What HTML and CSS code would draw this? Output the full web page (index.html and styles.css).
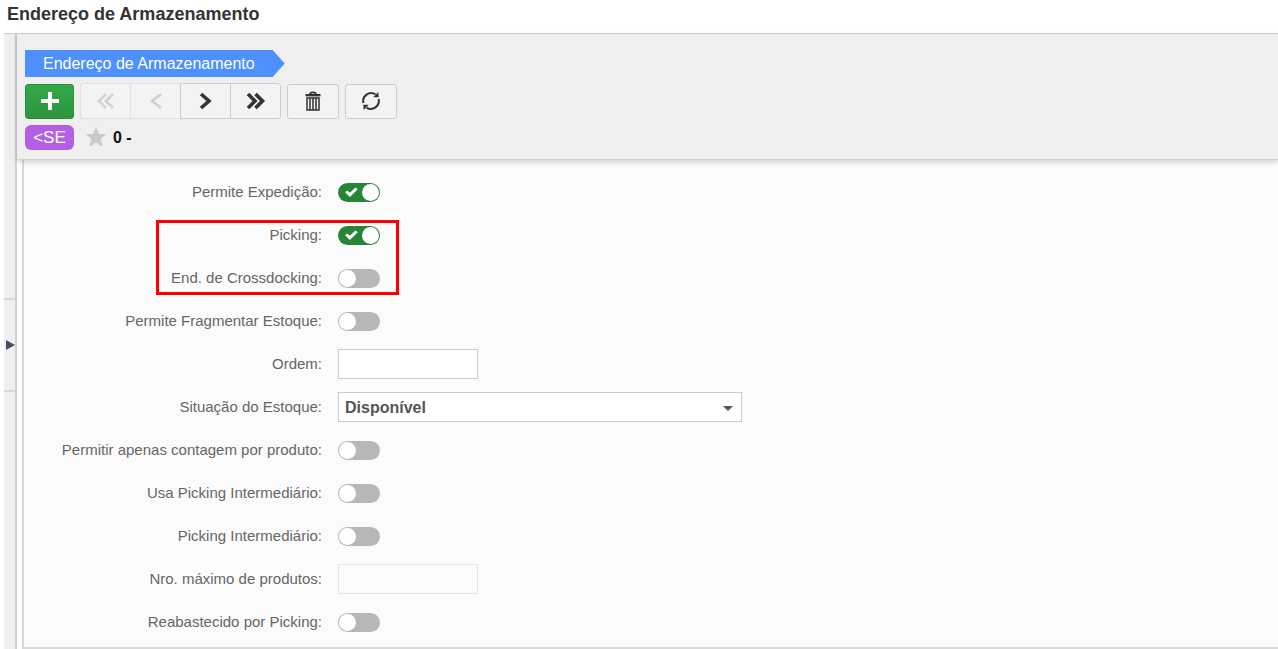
FILE: index.html
```html
<!DOCTYPE html>
<html lang="pt-BR">
<head>
<meta charset="utf-8">
<meta name="viewport" content="width=device-width, initial-scale=1">
<title>Endereço de Armazenamento</title>
<link rel="stylesheet" href="styles.css">
</head>
<body>
<h1 class="title">Endereço de Armazenamento</h1>
<div class="workspace">
  <aside class="rail">
    <button class="rail-toggle" type="button" aria-label="Expandir painel">
      <svg width="9" height="10" viewBox="0 0 9 10"><path d="M0 0L9 5L0 10Z" fill="#44505e"/></svg>
    </button>
  </aside>
  <main class="main">
    <header class="header">
      <a class="crumb" href="#">Endereço de Armazenamento</a>
      <div class="toolbar">
        <button class="btn btn-add" type="button" aria-label="Adicionar">
          <svg width="18" height="18" viewBox="0 0 18 18"><path d="M9 1V17M1 9H17" stroke="#fff" stroke-width="4" stroke-linecap="round"/></svg>
        </button>
        <div class="nav">
          <button class="nav-btn" type="button" aria-label="Primeiro" disabled>
            <svg width="20" height="18" viewBox="0 0 20 18"><path d="M10 2L3 9L10 16M17 2L10 9L17 16" fill="none" stroke="currentColor" stroke-width="2.6"/></svg>
          </button>
          <button class="nav-btn" type="button" aria-label="Anterior" disabled>
            <svg width="20" height="18" viewBox="0 0 20 18"><path d="M15 2L6 9L15 16" fill="none" stroke="currentColor" stroke-width="2.8"/></svg>
          </button>
          <button class="nav-btn" type="button" aria-label="Próximo">
            <svg width="20" height="18" viewBox="0 0 20 18"><path d="M5 2L13 9L5 16" fill="none" stroke="currentColor" stroke-width="3.6"/></svg>
          </button>
          <button class="nav-btn" type="button" aria-label="Último">
            <svg width="20" height="18" viewBox="0 0 20 18"><path d="M2 2L9 9L2 16M9.500 2L16.500 9L9.500 16" fill="none" stroke="currentColor" stroke-width="3.600"/></svg>
          </button>
        </div>
        <button class="btn" type="button" aria-label="Excluir">
          <svg width="16" height="20" viewBox="0 0 16 20"><path d="M5 3.500C5 0.600 11 0.600 11 3.500" fill="none" stroke="currentColor" stroke-width="1.800"/><path d="M0.500 3H15.500V5.400H0.500Z" fill="currentColor"/><path d="M2 7H14V19H2ZM5 7V19M8 7V19M11 7V19" fill="none" stroke="currentColor" stroke-width="1.500"/></svg>
        </button>
        <button class="btn" type="button" aria-label="Atualizar">
          <svg width="20" height="20" viewBox="0 0 20 20"><path d="M2.400 12A8 8 0 0 1 14.500 3.400M17.600 8A8 8 0 0 1 5.500 16.600" fill="none" stroke="currentColor" stroke-width="2"/><path d="M12.300 6.300L17.800 6.300L17.200 1ZM7.700 13.700H2.200L2.800 19Z" fill="currentColor"/></svg>
        </button>
      </div>
      <div class="record">
        <span class="chip">&lt;SE</span>
        <svg class="star" width="22" height="20" viewBox="0 0 22 20"><path d="M11 0L14 7H21.500L15.500 12L18 20L11 15.400L4 20L6.500 12L0.500 7H8Z" fill="#c9c9c9"/></svg>
        <span class="record-id">0 -</span>
      </div>
    </header>
    <form class="form">
      <div class="row"><label for="expedicao">Permite Expedição:</label><input class="switch" id="expedicao" type="checkbox" checked></div>
      <div class="marked">
        <div class="row"><label for="picking">Picking:</label><input class="switch" id="picking" type="checkbox" checked></div>
        <div class="row"><label for="crossdocking">End. de Crossdocking:</label><input class="switch" id="crossdocking" type="checkbox"></div>
      </div>
      <div class="row"><label for="fragmentar">Permite Fragmentar Estoque:</label><input class="switch" id="fragmentar" type="checkbox"></div>
      <div class="row"><label for="ordem">Ordem:</label><input class="field" id="ordem" type="text"></div>
      <div class="row"><label for="situacao">Situação do Estoque:</label>
        <div class="select">
          <select class="field" id="situacao"><option>Disponível</option></select>
          <svg class="caret" width="10" height="5" viewBox="0 0 10 5"><path d="M0 0H10L5 5Z" fill="#555"/></svg>
        </div>
      </div>
      <div class="row"><label for="contagem">Permitir apenas contagem por produto:</label><input class="switch" id="contagem" type="checkbox"></div>
      <div class="row"><label for="usa">Usa Picking Intermediário:</label><input class="switch" id="usa" type="checkbox"></div>
      <div class="row"><label for="intermediario">Picking Intermediário:</label><input class="switch" id="intermediario" type="checkbox"></div>
      <div class="row"><label for="maximo">Nro. máximo de produtos:</label><input class="field" id="maximo" type="text" disabled></div>
      <div class="row"><label for="reabastecido">Reabastecido por Picking:</label><input class="switch" id="reabastecido" type="checkbox"></div>
    </form>
  </main>
</div>
</body>
</html>
```

FILE: styles.css
```css
*,
*::before,
*::after {
  box-sizing: border-box;
}

body {
  margin: 0;
  min-height: 100vh;
  display: flex;
  flex-direction: column;
  background: #fff;
  color: #666;
  font-family: "Liberation Sans", Arial, sans-serif;
  font-size: 15px;
}

button {
  padding: 0;
  font: inherit;
}

.title {
  margin: 0;
  padding: 4px 7px 9px;
  font-size: 18px;
  line-height: 20px;
  color: #333;
}

.workspace {
  flex: 1;
  display: flex;
  margin-left: 4px;
  border-top: 1px solid #d0d0d0;
}

.rail {
  display: flex;
  flex-direction: column;
  flex: 0 0 11px;
  padding-top: 264px;
  background: #efefef;
}

.rail-toggle {
  display: flex;
  align-items: center;
  justify-content: flex-end;
  height: 94px;
  border: 0;
  border-top: 2px solid #d8d8d8;
  border-bottom: 2px solid #d8d8d8;
  background: #efefef;
}

.main {
  flex: 1;
  display: flex;
  flex-direction: column;
  min-width: 0;
  border-left: 2px solid #d0d0d0;
}

.header {
  position: relative;
  display: flex;
  flex-direction: column;
  align-items: flex-start;
  padding: 16px 8px 9px;
  background: #efefef;
  border-bottom: 1px solid #d0d0d0;
  box-shadow: 0 2px 5px rgba(0, 0, 0, 0.18);
}

.crumb {
  padding: 0 30px 0 18px;
  background: #4d90fe;
  clip-path: polygon(0 0, calc(100% - 12px) 0, 100% 50%, calc(100% - 12px) 100%, 0 100%);
  color: #fff;
  font-size: 16px;
  line-height: 27px;
  text-decoration: none;
}

.toolbar {
  display: flex;
  align-items: center;
  gap: 6px;
  margin-top: 6px;
}

.btn,
.nav-btn {
  display: flex;
  align-items: center;
  justify-content: center;
  width: 52px;
  height: 35px;
  border: 1px solid #ccc;
  border-radius: 3px;
  background: #f3f3f3;
  color: #333;
}

.btn-add {
  width: 49px;
  border-color: #2b8f3b;
  background: linear-gradient(#35a84a, #2d9440);
}

.nav {
  display: flex;
}

.nav-btn {
  width: 51px;
  height: 36px;
  border-radius: 0;
}

.nav-btn + .nav-btn {
  margin-left: -1px;
}

.nav-btn:first-child {
  border-radius: 3px 0 0 3px;
}

.nav-btn:last-child {
  border-radius: 0 3px 3px 0;
}

.nav-btn:disabled {
  border-color: #e0e0e0;
  color: #d2d2d2;
}

.record {
  display: flex;
  align-items: center;
  margin-top: 6px;
}

.chip {
  width: 49px;
  border-radius: 6px;
  background: #b45fe3;
  color: #fff;
  font-size: 17px;
  line-height: 25px;
  text-align: center;
}

.star {
  margin: 0 6px 2px 11px;
}

.record-id {
  color: #111;
  font-size: 16px;
  font-weight: bold;
}

.form {
  flex: 1;
  display: flex;
  flex-direction: column;
  gap: 13px;
  margin-left: 5px;
  padding: 17px 0 10px;
  border: solid #d8d8d8;
  border-width: 0 0 2px 2px;
  background: #fbfbfb;
}

.row {
  display: grid;
  grid-template-columns: 298px 1fr;
  column-gap: 16px;
  align-items: center;
  height: 30px;
}

.row label {
  padding-bottom: 2px;
  text-align: right;
  white-space: nowrap;
}

.marked {
  position: relative;
  display: grid;
  gap: 13px;
}

.marked::after {
  content: "";
  position: absolute;
  top: 0;
  left: 132px;
  width: 243px;
  height: 75px;
  border: 3px solid #f00;
  pointer-events: none;
}

.switch {
  appearance: none;
  display: flex;
  align-items: center;
  width: 42px;
  height: 19px;
  margin: 0;
  border-radius: 10px;
  background: #b7b7b7;
}

.switch::before {
  content: "";
  width: 17px;
  height: 17px;
  margin-left: 1px;
  border-radius: 50%;
  background: #fff;
}

.switch:checked {
  justify-content: space-between;
  flex-direction: row-reverse;
  padding: 0 1px 0 7px;
  background: #278536;
}

.switch:checked::after {
  content: "";
  width: 13px;
  height: 10px;
  background: #fff;
  clip-path: polygon(0 52%, 18% 34%, 38% 58%, 80% 4%, 98% 22%, 38% 100%);
}

.field {
  width: 140px;
  height: 30px;
  padding: 0 6px;
  border: 1px solid #ccc;
  border-radius: 0;
  background: #fff;
  color: #555;
  font: bold 16px "Liberation Sans", Arial, sans-serif;
}

.field:disabled {
  border-color: #e2e2e2;
  background: #fbfbfb;
}

.select {
  position: relative;
  width: 404px;
}

.select .field {
  appearance: none;
  display: block;
  width: 100%;
}

.caret {
  position: absolute;
  top: 14px;
  right: 9px;
  pointer-events: none;
}
```
